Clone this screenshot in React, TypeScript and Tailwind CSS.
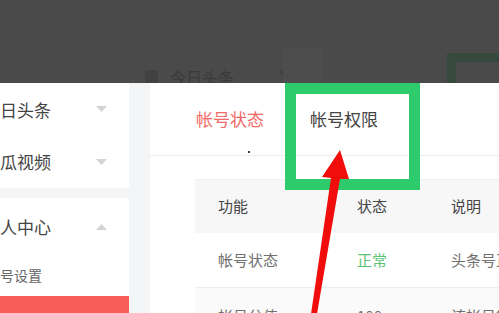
import React from 'react';

const rows = [
  { name: '帐号状态', status: '正常', note: '头条号正常使用中', green: true },
  { name: '帐号分值', status: '100', note: '该帐号行为良好', green: false },
];

function Caret({ up = false }: { up?: boolean }) {
  return (
    <svg width="11" height="7" viewBox="0 0 11 7" className="shrink-0">
      <path d={up ? 'M0 7 L5.5 1 L11 7 Z' : 'M0 0 L5.5 6 L11 0 Z'} fill="#d4d4d4" />
    </svg>
  );
}

export default function App() {
  return (
    <div className="relative w-[499px] h-[313px] overflow-hidden bg-[#f4f5f6] font-['Noto_Sans_CJK_SC','Noto_Sans',sans-serif]">
      {/* dimmed header */}
      <div className="relative h-[83px] bg-[#4a4a4a] overflow-hidden">
        <div className="absolute left-[283px] top-[48px] w-[39px] h-[40px] bg-[#4d4d4d]" />
        <div className="flex items-center pl-[145px] pt-[67px]">
          <div className="w-[13px] h-[15px] bg-[#414141] rounded-[2px]" />
          <span className="ml-[12px] text-[16px] leading-[20px] text-[#3a3a3a]">今日头条</span>
          <svg width="10" height="6" viewBox="0 0 10 6" className="ml-[44px] mt-[-6px]">
            <path d="M0 0 L5 5 L10 0 Z" fill="#3f3f3f" />
          </svg>
        </div>
        <div className="absolute left-[447px] top-[53px] w-[70px] h-[50px] border-l-[9px] border-t-[9px] border-[#36493c]" />
      </div>

      <div className="flex gap-[21px]">
        {/* sidebar */}
        <div className="w-[146px] ml-[-17px] shrink-0 flex flex-col gap-[10px]">
          <div className="bg-white flex flex-col">
            <div className="h-[53px] flex items-center justify-between pr-[22px] text-[17px] text-[#444]">
              <span>今日头条</span>
              <Caret />
            </div>
            <div className="h-[52px] flex items-center justify-between pr-[22px] text-[17px] text-[#444]">
              <span>西瓜视频</span>
              <Caret />
            </div>
          </div>
          <div className="bg-white flex flex-col">
            <div className="h-[57px] flex items-center justify-between pr-[22px] text-[17px] text-[#444]">
              <span>个人中心</span>
              <Caret up />
            </div>
            <div className="h-[41px] flex items-center pl-[3px] text-[14px] text-[#666]">帐号设置</div>
            <div className="h-[40px] flex items-center pl-[3px] pt-[26px] bg-[#f85c5a] text-[14px] text-white">帐号权限</div>
          </div>
        </div>

        {/* main */}
        <div className="flex-1 bg-white h-[230px]">
          <div className="relative h-[73px] border-b border-[#ececec] flex items-center pl-[46px] gap-[46px] text-[17px]">
            <span className="text-[#f06a66]">帐号状态</span>
            <span className="text-[#444]">帐号权限</span>
            <div className="absolute left-[98px] top-[68px] w-[2px] h-[2px] rounded-full bg-black" />
          </div>
          <div className="ml-[45px] mt-[23px] text-[15px]">
            <div className="flex h-[54px] items-center bg-[#f7f7f7] border-t border-[#eeeeee] text-[#444]">
              <div className="w-[139px] pl-[23px]">功能</div>
              <div className="w-[94px] pl-[23px]">状态</div>
              <div className="pl-[23px] whitespace-nowrap">说明</div>
            </div>
            {rows.map((r, i) => (
              <div
                key={r.name}
                className={`flex h-[55px] items-center border-b border-[#eeeeee] text-[#707070] whitespace-nowrap ${i === 1 ? 'bg-[#fafafa] pt-[2px]' : ''}`}
              >
                <div className="w-[139px] pl-[23px]">{r.name}</div>
                <div className={`w-[94px] pl-[23px] ${r.green ? 'text-[#5cc274]' : ''}`}>{r.status}</div>
                <div className="pl-[23px]">{r.note}</div>
              </div>
            ))}
          </div>
        </div>
      </div>

      {/* annotation: green box + red arrow */}
      <div className="absolute left-[285px] top-[83px] w-[135px] h-[107px] border-[11px] border-[#2ecb6d]" />
      <svg className="absolute left-0 top-0" width="499" height="313" viewBox="0 0 499 313">
        <polygon
          points="340,150 349,179 340,179 317,314 311,314 331,178 322,177"
          fill="#f20d0d"
        />
      </svg>
    </div>
  );
}
